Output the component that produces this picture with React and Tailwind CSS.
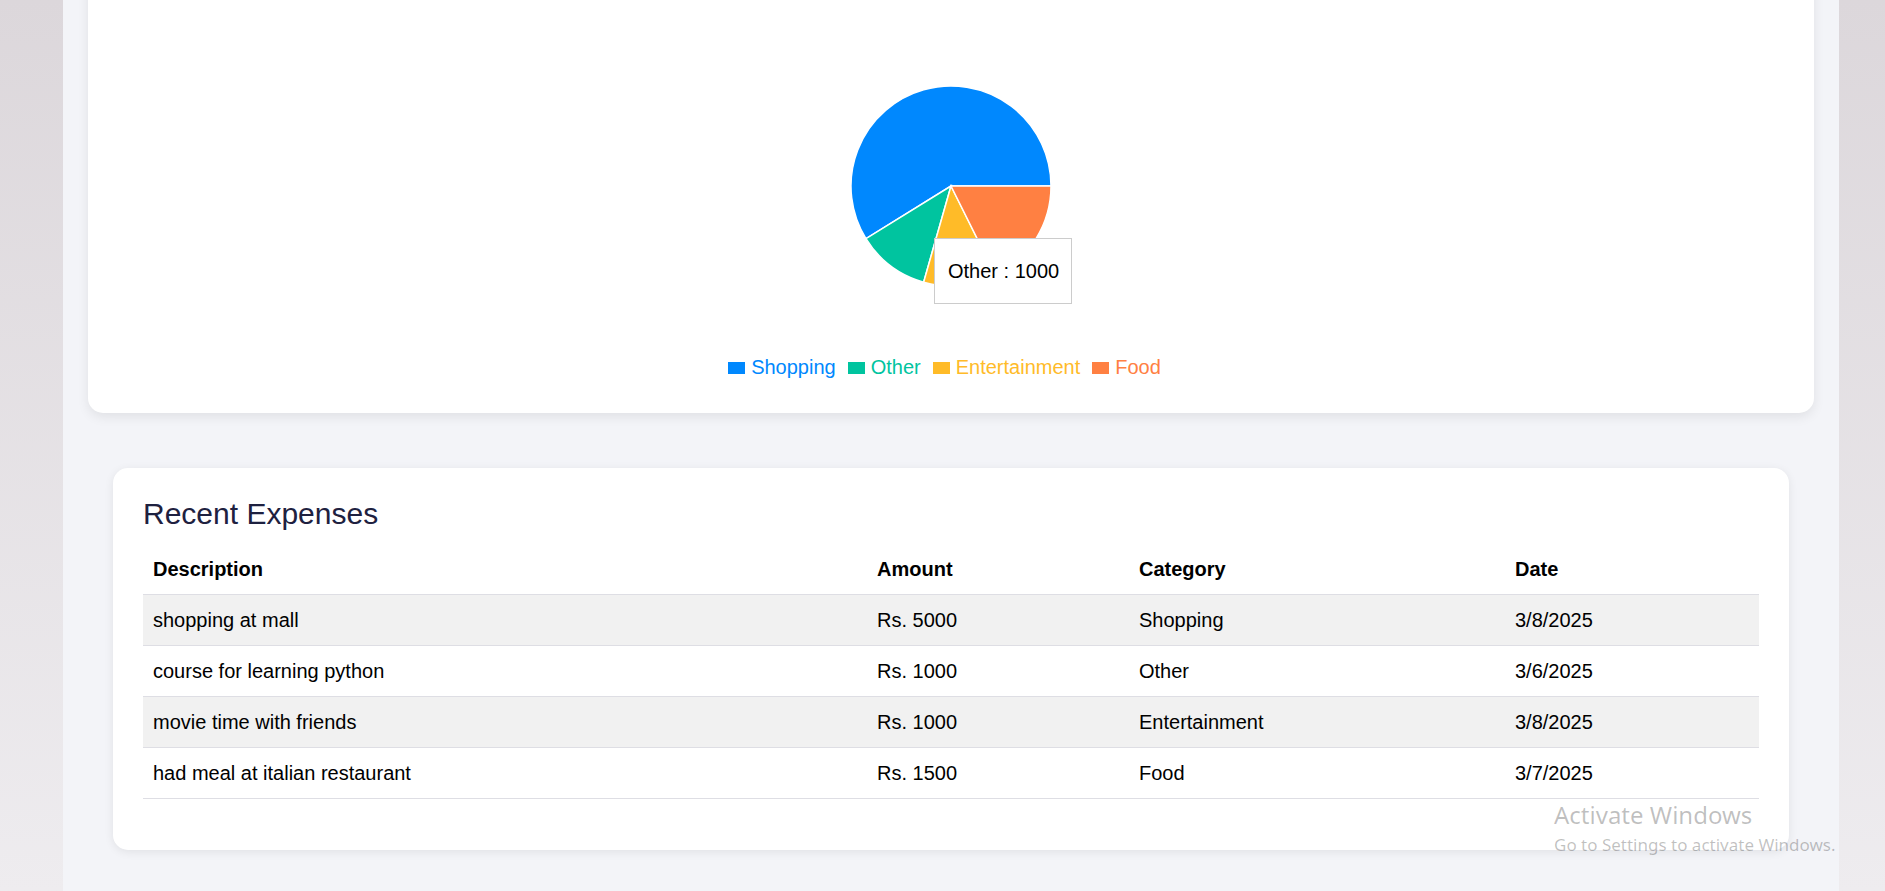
import React from "react";

const expenses = [
  { description: "shopping at mall", amount: 5000, category: "Shopping", date: "3/8/2025" },
  { description: "course for learning python", amount: 1000, category: "Other", date: "3/6/2025" },
  { description: "movie time with friends", amount: 1000, category: "Entertainment", date: "3/8/2025" },
  { description: "had meal at italian restaurant", amount: 1500, category: "Food", date: "3/7/2025" },
];

const slices = [
  { name: "Shopping", value: 5000, color: "#0088FE", text: "text-[#0088FE]" },
  { name: "Other", value: 1000, color: "#00C49F", text: "text-[#00C49F]" },
  { name: "Entertainment", value: 1000, color: "#FFBB28", text: "text-[#FFBB28]" },
  { name: "Food", value: 1500, color: "#FF8042", text: "text-[#FF8042]" },
];

const CX = 125;
const CY = 125;
const R = 100;

const point = (deg) => {
  const rad = (deg * Math.PI) / 180;
  return [CX + R * Math.cos(rad), CY - R * Math.sin(rad)];
};

const slicePath = (start, end) => {
  const [x1, y1] = point(start);
  const [x2, y2] = point(end);
  const large = end - start > 180 ? 1 : 0;
  return `M${CX},${CY} L${x1},${y1} A${R},${R} 0 ${large} 0 ${x2},${y2} Z`;
};

const PieChart = () => {
  const total = slices.reduce((s, d) => s + d.value, 0);
  let angle = 0;
  return (
    <div className="relative w-[250px] h-[250px]">
      <svg width="250" height="250" viewBox="0 0 250 250">
        {slices.map((s) => {
          const start = angle;
          angle += (s.value / total) * 360;
          return (
            <path
              key={s.name}
              d={slicePath(start, angle)}
              fill={s.color}
              stroke="#fff"
              strokeWidth="1.5"
            />
          );
        })}
      </svg>
      {/* hover tooltip */}
      <div className="absolute left-[108px] top-[177px] w-[138px] h-[66px] bg-white border border-[#cccccc] flex items-center pl-[13px] text-[20px] text-black whitespace-nowrap">
        Other : 1000
      </div>
    </div>
  );
};

const Legend = () => (
  <div className="flex items-center gap-[12px] mr-[13px]">
    {slices.map((s) => (
      <div key={s.name} className="flex items-center gap-[6px]">
        <span className="w-[17px] h-[12px]" style={{ backgroundColor: s.color }} />
        <span className={`text-[20px] leading-[23px] ${s.text}`}>{s.name}</span>
      </div>
    ))}
  </div>
);

export default function App() {
  return (
    <div className="relative h-[891px] w-full overflow-hidden flex bg-linear-to-b from-[#dcd7db] to-[#eeecef] font-['Liberation_Sans',Arial,sans-serif]">
      <div className="w-[63px] shrink-0" />
      <main className="w-[1776px] shrink-0 bg-[#f3f4f8] flex flex-col">
        <section className="-mt-[40px] mx-[25px] h-[453px] bg-white rounded-[15px] shadow-[0_4px_12px_rgba(0,0,0,0.08)] flex flex-col items-center pt-[101px]">
          <PieChart />
          <div className="mt-[45px]">
            <Legend />
          </div>
        </section>

        <section className="mt-[55px] mx-[50px] bg-white rounded-[15px] shadow-[0_2px_10px_rgba(0,0,0,0.08)] px-[30px] pt-[30px] pb-[51px]">
          <h2 className="text-[30px] leading-[32px] text-[#1e2140] mb-[14px]">Recent Expenses</h2>
          <table className="w-full table-fixed border-collapse text-[20px] text-black">
            <thead>
              <tr>
                <th className="w-[724px] h-[50px] px-[10px] text-left font-bold border-b border-[#dedee4]">Description</th>
                <th className="w-[262px] h-[50px] px-[10px] text-left font-bold border-b border-[#dedee4]">Amount</th>
                <th className="w-[376px] h-[50px] px-[10px] text-left font-bold border-b border-[#dedee4]">Category</th>
                <th className="h-[50px] px-[10px] text-left font-bold border-b border-[#dedee4]">Date</th>
              </tr>
            </thead>
            <tbody>
              {expenses.map((e, i) => (
                <tr key={i} className={i % 2 === 0 ? "bg-[#f1f1f1]" : "bg-white"}>
                  <td className="h-[51px] px-[10px] border-b border-[#dedee4]">{e.description}</td>
                  <td className="h-[51px] px-[10px] border-b border-[#dedee4]">Rs. {e.amount}</td>
                  <td className="h-[51px] px-[10px] border-b border-[#dedee4]">{e.category}</td>
                  <td className="h-[51px] px-[10px] border-b border-[#dedee4]">{e.date}</td>
                </tr>
              ))}
            </tbody>
          </table>
        </section>
      </main>
      <div className="flex-1" />

      {/* windows watermark */}
      <div className="absolute left-[1554px] top-[800px] text-black/25 font-['Noto_Sans',sans-serif] pointer-events-none">
        <div className="text-[24px] leading-[30px]">Activate Windows</div>
        <div className="text-[17px] leading-[30px]">Go to Settings to activate Windows.</div>
      </div>
    </div>
  );
}
